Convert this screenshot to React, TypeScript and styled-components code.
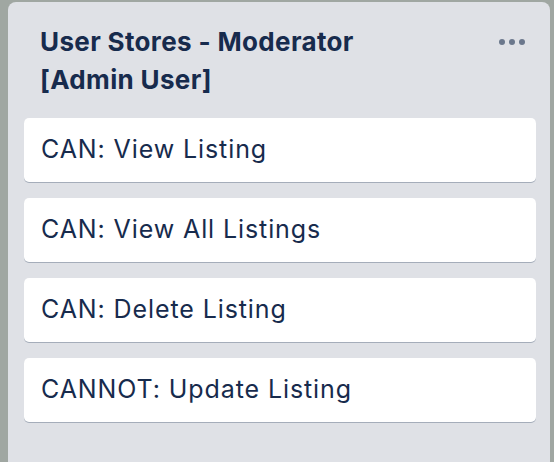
import React from 'react'
import styled, { createGlobalStyle } from 'styled-components'

const GlobalStyle = createGlobalStyle`
  html, body {
    margin: 0;
    padding: 0;
    background: #a0a7a2;
    height: 100%;
    overflow: hidden;
  }
  body {
    font-family: Inter, "Noto Sans", "Liberation Sans", sans-serif;
  }
`

const Board = styled.div`
  padding: 2px 4px 0 8px;
  height: 462px;
  box-sizing: border-box;
`

const List = styled.section`
  background: #dfe1e6;
  border-radius: 8px 8px 0 0;
  height: 100%;
  padding: 21px 14px 0 16px;
  box-sizing: border-box;
`

const ListHeader = styled.header`
  display: flex;
  justify-content: space-between;
  align-items: flex-start;
  padding-left: 16px;
  margin-bottom: 19px;
`

const ListTitle = styled.h2`
  margin: 0;
  font-size: 26px;
  line-height: 38px;
  letter-spacing: 0.35px;
  font-weight: 700;
  color: #172b4d;
`

const MenuButton = styled.button`
  display: flex;
  gap: 4px;
  border: none;
  background: transparent;
  padding: 0;
  margin: 16px 11px 0 0;
  cursor: pointer;
`

const Dot = styled.span`
  width: 6px;
  height: 6px;
  border-radius: 50%;
  background: #6b778c;
`

const Cards = styled.div`
  display: flex;
  flex-direction: column;
  gap: 16px;
`

const Card = styled.div`
  background: #fff;
  border-radius: 5px;
  box-shadow: 0 1px 0 #a5adba;
  padding: 15px 17px 17px;
  font-size: 25px;
  line-height: 32px;
  letter-spacing: 0.9px;
  color: #172b4d;
`

const permissions = [
  'CAN: View Listing',
  'CAN: View All Listings',
  'CAN: Delete Listing',
  'CANNOT: Update Listing',
]

export default function App() {
  return (
    <>
      <GlobalStyle />
      <Board>
        <List>
          <ListHeader>
            <ListTitle>
              User Stores - Moderator
              <br />
              [Admin User]
            </ListTitle>
            <MenuButton aria-label="List actions">
              <Dot />
              <Dot />
              <Dot />
            </MenuButton>
          </ListHeader>
          <Cards>
            {permissions.map((p) => (
              <Card key={p}>{p}</Card>
            ))}
          </Cards>
        </List>
      </Board>
    </>
  )
}
